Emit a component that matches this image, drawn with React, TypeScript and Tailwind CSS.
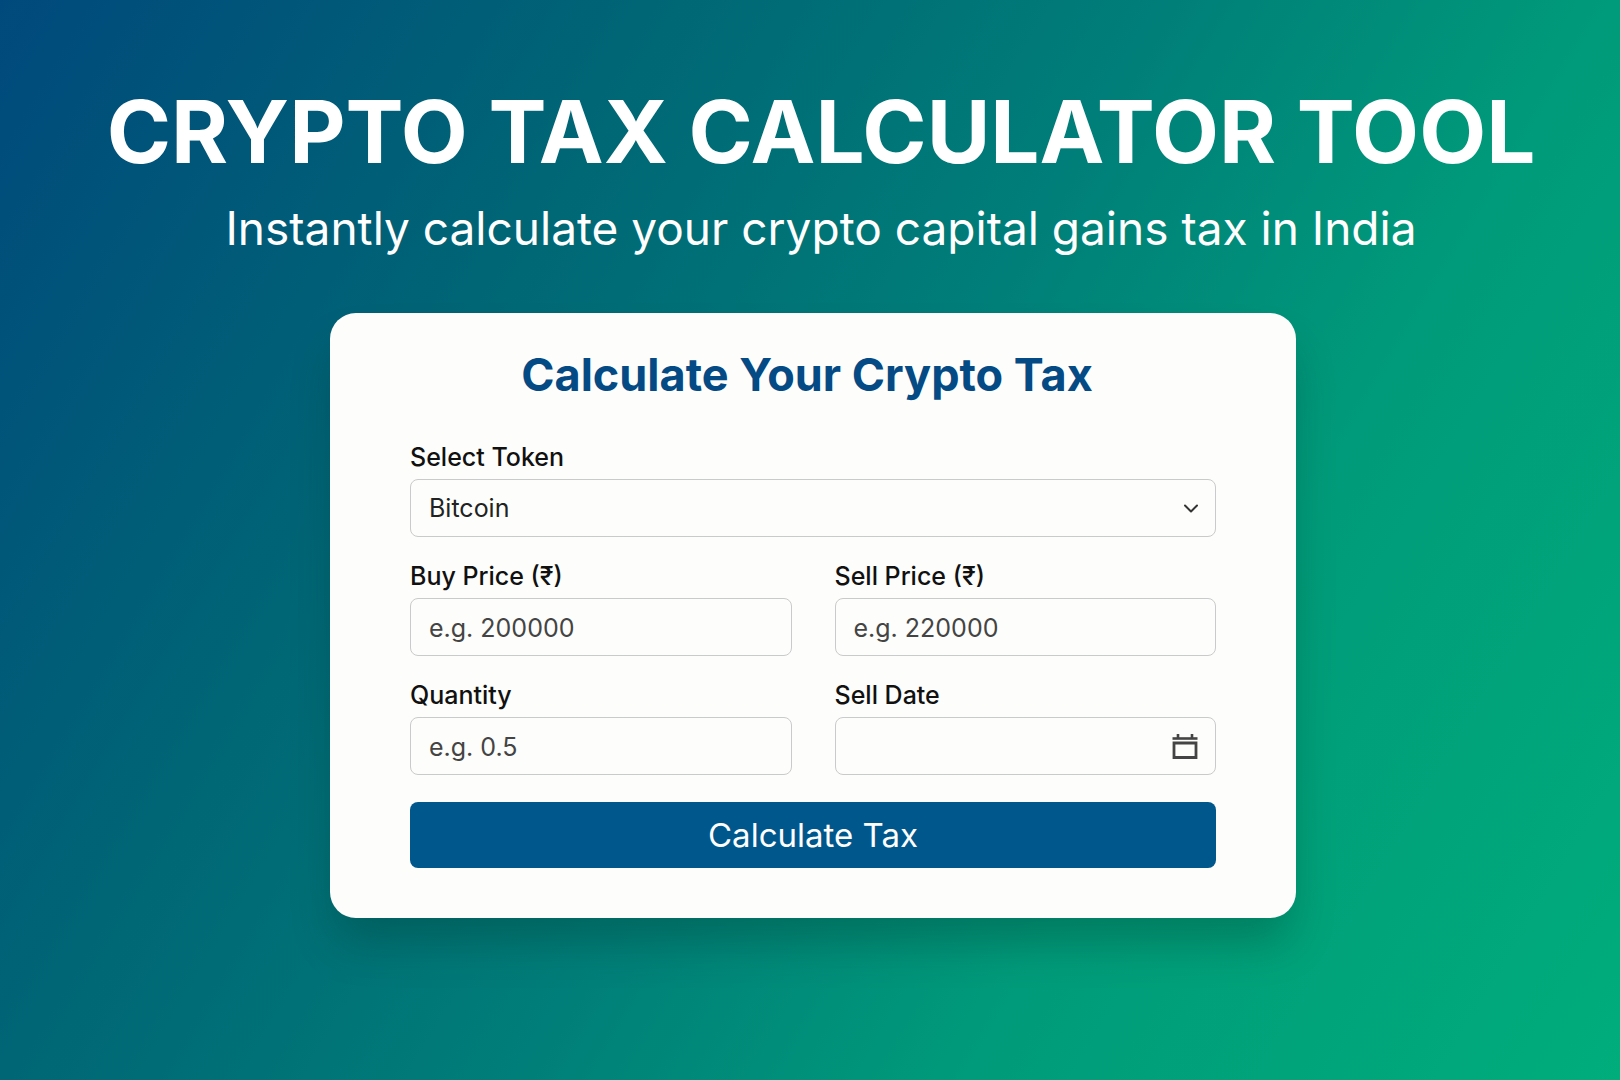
import { useState } from "react";
import type { InputHTMLAttributes } from "react";

interface FieldProps extends InputHTMLAttributes<HTMLInputElement> {
  id: string;
  label: string;
}

const labelClass = "text-[25px] leading-8 font-medium text-[#111111]";
const controlClass =
  "h-[58px] w-full rounded-lg border border-[#c9cbca] bg-[#fdfdfb] px-[18px] pt-0.5 text-[25px] text-[#222222] outline-none placeholder:text-[#444444] focus:border-[#00578c]";

function Field({ id, label, ...props }: FieldProps) {
  return (
    <div className="flex flex-col gap-1.5">
      <label htmlFor={id} className={labelClass}>
        {label}
      </label>
      <input id={id} className={controlClass} {...props} />
    </div>
  );
}

function ChevronIcon() {
  return (
    <svg
      className="pointer-events-none absolute top-1/2 right-[17px] h-4 w-4 -translate-y-1/2"
      viewBox="0 0 16 16"
      fill="none"
      stroke="#333333"
      strokeWidth="2"
      strokeLinecap="round"
      strokeLinejoin="round"
    >
      <path d="M2 5.5l6 6 6-6" />
    </svg>
  );
}

function CalendarIcon() {
  return (
    <svg
      className="pointer-events-none absolute top-1/2 right-[18px] h-[26px] w-[26px] -translate-y-1/2"
      viewBox="0 0 26 26"
      fill="none"
      stroke="#444444"
    >
      <path d="M0.5 5.5h25" strokeWidth="2.6" />
      <path d="M6 1v4M20 1v4" strokeWidth="2.6" />
      <path d="M2 10h22v14.5H2z" strokeWidth="2.8" />
    </svg>
  );
}

export default function App() {
  const [token, setToken] = useState("bitcoin");
  const [buyPrice, setBuyPrice] = useState("");
  const [sellPrice, setSellPrice] = useState("");
  const [quantity, setQuantity] = useState("");
  const [sellDate, setSellDate] = useState("");

  return (
    <main className="flex min-h-screen flex-col items-center bg-[linear-gradient(121deg,#00497c_0%,#006775_30%,#007f79_52%,#009b7a_71%,#00ad7b_100%)] pt-[84px] pb-10 pl-1.5 font-['Inter','Liberation_Sans',sans-serif]">
      {/* Hero */}
      <header className="pl-4 text-center text-white">
        <h1 className="text-[87px] leading-[96px] font-bold">CRYPTO TAX CALCULATOR TOOL</h1>
        <p className="mt-[18px] text-[46px] leading-[60px]">
          Instantly calculate your crypto capital gains tax in India
        </p>
      </header>

      {/* Calculator card */}
      <section className="mt-[55px] w-full max-w-[966px] rounded-[26px] bg-[#fdfdfb] px-20 pt-[34px] pb-[50px] shadow-[0_30px_44px_-6px_rgba(0,50,40,0.3)]">
        <h2 className="pr-3 text-center text-[45px] leading-[56px] font-bold text-[#044a84]">
          Calculate Your Crypto Tax
        </h2>

        <form className="mt-[38px]" onSubmit={(e) => e.preventDefault()}>
          <div className="grid grid-cols-2 gap-x-[43px] gap-y-[23px]">
            <div className="col-span-2 flex flex-col gap-1.5">
              <label htmlFor="token" className={labelClass}>
                Select Token
              </label>
              <div className="relative">
                <select
                  id="token"
                  value={token}
                  onChange={(e) => setToken(e.target.value)}
                  className={`${controlClass} appearance-none`}
                >
                  <option value="bitcoin">Bitcoin</option>
                </select>
                <ChevronIcon />
              </div>
            </div>

            <Field
              id="buy-price"
              label="Buy Price (₹)"
              placeholder="e.g. 200000"
              inputMode="decimal"
              value={buyPrice}
              onChange={(e) => setBuyPrice(e.target.value)}
            />
            <Field
              id="sell-price"
              label="Sell Price (₹)"
              placeholder="e.g. 220000"
              inputMode="decimal"
              value={sellPrice}
              onChange={(e) => setSellPrice(e.target.value)}
            />
            <Field
              id="quantity"
              label="Quantity"
              placeholder="e.g. 0.5"
              inputMode="decimal"
              value={quantity}
              onChange={(e) => setQuantity(e.target.value)}
            />

            <div className="flex flex-col gap-1.5">
              <label htmlFor="sell-date" className={labelClass}>
                Sell Date
              </label>
              <div className="relative">
                <input
                  id="sell-date"
                  type="date"
                  value={sellDate}
                  onChange={(e) => setSellDate(e.target.value)}
                  className={`${controlClass} [&::-webkit-calendar-picker-indicator]:opacity-0 ${
                    sellDate ? "" : "[&::-webkit-datetime-edit]:opacity-0"
                  }`}
                />
                <CalendarIcon />
              </div>
            </div>
          </div>

          <button
            type="submit"
            className="mt-[27px] h-[66px] w-full rounded-lg bg-[#00578c] text-[33px] leading-10 text-white transition-colors hover:bg-[#004a7c]"
          >
            Calculate Tax
          </button>
        </form>
      </section>
    </main>
  );
}
